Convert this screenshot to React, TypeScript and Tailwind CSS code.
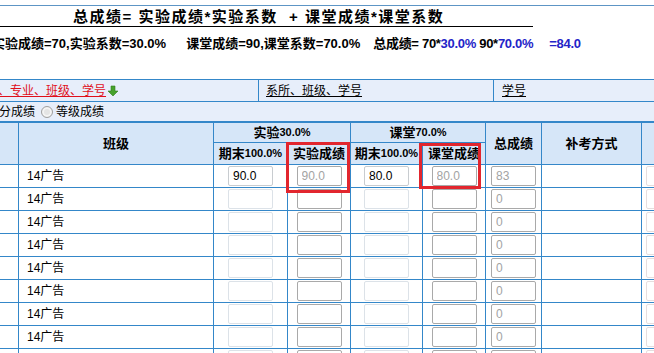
const font = "font-['Liberation_Sans','Noto_Sans_CJK_SC',sans-serif]";

const rows = Array.from({ length: 9 }, (_, i) => i);

const GreenArrow = () => (
  <svg width="12" height="12" viewBox="0 0 12 12" className="ml-[1px]">
    <path d="M4 1h4v5h3l-5 5-5-5h3z" fill="#46a22c" stroke="#2f7d1d" strokeWidth="0.6" />
  </svg>
);

const Box = ({ value, readonly, light }: { value?: string; readonly?: boolean; light?: boolean }) => (
  <input
    readOnly
    defaultValue={value}
    className={`w-[45px] h-[20px] rounded-[2px] border px-[4px] text-[12px] outline-none bg-white ${font} ${
      readonly
        ? "border-[#a9a9a9] text-[#a3a3a3]"
        : light
        ? "border-[#dce2e8] text-black"
        : "border-[#c8ccd0] text-black"
    }`}
  />
);

export default function App() {
  return (
    <div className={`w-[654px] h-[353px] overflow-hidden bg-white relative ${font} text-black`}>
      <div className="pt-[5px]">
        <div className="h-px bg-[#5d95c5]" />
      </div>
      <div className="h-[20px] flex items-center pl-[73px]">
        <h1 className="text-[15px] font-bold tracking-[1.5px] leading-none whitespace-nowrap">
          总成绩= 实验成绩*实验系数 &nbsp;+ 课堂成绩*课堂系数
        </h1>
      </div>
      <div className="h-px w-[533px] bg-black" />
      <div className="h-[33px] flex items-center text-[13px] font-bold whitespace-nowrap">
        <span className="ml-[-8px]">实验成绩=70,实验系数=30.0%</span>
        <span className="ml-[20px]">课堂成绩=90,课堂系数=70.0%</span>
        <span className="ml-[13px] tracking-[-0.3px]">
          总成绩= 70*<span className="text-[#2424c8]">30.0%</span> 90*
          <span className="text-[#2424c8]">70.0%</span>
          <span className="text-[#2424c8] ml-[16px]">=84.0</span>
        </span>
      </div>
      <div className="h-[19px]" />

      <div className="border-t border-[#3487c9] bg-[#e7eefa] text-[12px]">
        <div className="h-[22px] flex border-b border-[#3487c9]">
          <div className="w-[259px] flex items-center border-r border-[#3487c9]">
            <a className="ml-[-2px] text-[#e0101a] underline">、专业、班级、学号</a>
            <GreenArrow />
          </div>
          <div className="w-[235px] flex items-center pl-[7px] border-r border-[#3487c9]">
            <a className="underline">系所、班级、学号</a>
          </div>
          <div className="flex-1 flex items-center pl-[8px]">
            <a className="underline">学号</a>
          </div>
        </div>
        <div className="h-[19px] flex items-center">
          <span className="ml-[-1px]">分成绩</span>
          <span className="ml-[6px] w-[12px] h-[12px] rounded-full border border-[#a0a0a0] bg-[#e4e4e4] shadow-[inset_0_0_0_2px_#f4f4f4]" />
          <span className="ml-[3px]">等级成绩</span>
        </div>
      </div>

      <div className="ml-[-21px] w-[723px]">
        <div className="flex h-[44px] border-t-2 border-b border-[#3487c9] bg-[#d6e6f8] text-[13px] font-bold">
          <div className="w-[40px] border-r border-[#3487c9]" />
          <div className="w-[195px] border-r border-[#3487c9] flex items-center justify-center">班级</div>
          <div className="w-[137px] flex flex-col">
            <div className="h-[20px] border-r border-b border-[#3487c9] flex items-center justify-center">
              实验<span className="text-[11px]">30.0%</span>
            </div>
            <div className="flex-1 flex">
              <div className="w-[74px] border-r border-[#3487c9] flex items-center justify-center">
                期末<span className="text-[11px]">100.0%</span>
              </div>
              <div className="w-[63px] border-r border-[#3487c9] flex items-center justify-center">实验成绩</div>
            </div>
          </div>
          <div className="w-[135px] flex flex-col">
            <div className="h-[20px] border-r border-b border-[#3487c9] flex items-center justify-center">
              课堂<span className="text-[11px]">70.0%</span>
            </div>
            <div className="flex-1 flex">
              <div className="w-[72px] border-r border-[#3487c9] flex items-center justify-center">
                期末<span className="text-[11px]">100.0%</span>
              </div>
              <div className="w-[63px] border-r border-[#3487c9] flex items-center justify-center">课堂成绩</div>
            </div>
          </div>
          <div className="w-[56px] border-r border-[#3487c9] flex items-center justify-center">总成绩</div>
          <div className="w-[100px] border-r border-[#3487c9] flex items-center justify-center">补考方式</div>
          <div className="w-[60px]" />
        </div>

        {rows.map((i) => (
          <div key={i} className="flex h-[23px] border-b border-[#3487c9] text-[12px]">
            <div className="w-[40px] border-r border-[#3487c9]" />
            <div className="w-[195px] border-r border-[#3487c9] flex items-center pl-[8px]">14广告</div>
            <div className="w-[74px] border-r border-[#3487c9] flex items-center justify-center">
              <Box value={i === 0 ? "90.0" : ""} light={i !== 0} />
            </div>
            <div className="w-[63px] border-r border-[#3487c9] flex items-center justify-center">
              <Box value={i === 0 ? "90.0" : ""} readonly />
            </div>
            <div className="w-[72px] border-r border-[#3487c9] flex items-center justify-center">
              <Box value={i === 0 ? "80.0" : ""} light={i !== 0} />
            </div>
            <div className="w-[63px] border-r border-[#3487c9] flex items-center justify-center">
              <Box value={i === 0 ? "80.0" : ""} readonly />
            </div>
            <div className="w-[56px] border-r border-[#3487c9] flex items-center justify-center">
              <Box value={i === 0 ? "83" : "0"} readonly />
            </div>
            <div className="w-[100px] border-r border-[#3487c9]" />
            <div className="w-[60px] flex items-center pl-[4px]">
              <input readOnly className="w-[45px] h-[20px] rounded-[2px] border border-[#e6dede] bg-white" />
            </div>
          </div>
        ))}
      </div>

      <div className="absolute left-[286px] top-[142px] w-[64px] h-[51px] border-[3px] border-[#e2262e]" />
      <div className="absolute left-[419px] top-[143px] w-[62px] h-[46px] border-[3px] border-[#e2262e]" />
    </div>
  );
}
